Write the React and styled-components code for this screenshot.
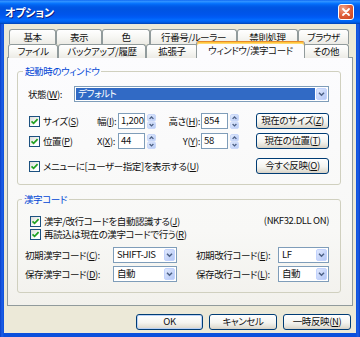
import React from 'react';
import styled, { createGlobalStyle } from 'styled-components';

const GlobalStyle = createGlobalStyle`
  * { box-sizing: border-box; }
  html, body { margin: 0; padding: 0; }
  body {
    width: 360px;
    height: 337px;
    overflow: hidden;
    font-family: 'Noto Sans CJK JP', 'Noto Sans', sans-serif;
    font-size: 9.5px;
    letter-spacing: -0.4px;
    font-feature-settings: 'palt';
    color: #111;
  }
`;

const Window = styled.div`
  width: 360px;
  height: 337px;
  display: flex;
  flex-direction: column;
  background: linear-gradient(90deg, #0A3FC8 0, #1D5FE6 2px, #0B4FDC 4px, #0B4FDC 356px, #1D5FE6 358px, #0A3FC8 100%);
`;

const TitleBar = styled.div`
  height: 24px;
  flex-shrink: 0;
  display: flex;
  align-items: center;
  justify-content: space-between;
  padding: 0 6px 0 5px;
  background: linear-gradient(180deg, #0058EE 0%, #3593FF 4%, #288EFF 8%, #127DFF 12%, #036FFC 16%, #0262EE 22%, #0057E5 30%, #0054E3 40%, #0055EB 60%, #005BF5 72%, #026AFE 82%, #0062EF 90%, #0052D6 96%, #0040AB 100%);
`;

const Title = styled.span`
  color: #fff;
  font-weight: bold;
  font-size: 11px;
  letter-spacing: -0.2px;
  text-shadow: 1px 1px 0 #0A1E80;
`;

const CloseButton = styled.div`
  width: 16px;
  height: 16px;
  border: 1px solid #fff;
  border-radius: 3px;
  background: radial-gradient(circle at 30% 25%, #F0A48A 0%, #E2623E 45%, #C8401C 100%);
  display: flex;
  align-items: center;
  justify-content: center;
`;

const Client = styled.div`
  flex: 1;
  margin: 0 4px 4px;
  background: #ECE9D8;
  padding: 4px 3px 0;
  display: flex;
  flex-direction: column;
`;

const TabRow = styled.div`
  display: flex;
  align-items: flex-start;
  height: ${({ h }) => h}px;
  padding-left: ${({ indent }) => indent}px;
  margin-top: ${({ top }) => top || 0}px;
  position: relative;
  z-index: 2;
`;

const Tab = styled.div`
  width: ${({ w }) => w}px;
  height: ${({ h }) => h}px;
  flex-shrink: 0;
  display: flex;
  align-items: center;
  justify-content: center;
  border: 1px solid #919B9C;
  border-bottom: none;
  border-radius: 3px 3px 0 0;
  background: linear-gradient(#FFFFFF, #F7F7F4 50%, #ECEBE5);
  white-space: nowrap;
  line-height: 1;
  padding-top: 1px;
`;

const ActiveTab = styled(Tab)`
  height: 17px;
  margin: -3px -2px 0;
  width: ${({ w }) => w + 4}px;
  background: #FCFCFE;
  border-top: 1px solid #E68B2C;
  box-shadow: inset 0 1px 0 #FFC73C, inset 0 2px 0 #FFD870;
  position: relative;
  z-index: 3;
  padding-top: 2px;
`;

const Panel = styled.div`
  height: 249px;
  margin-top: -1px;
  border: 1px solid #919B9C;
  background: linear-gradient(#FCFCFE, #F8F8F6 70%, #F2F1EC);
  padding: 0 11px 0 9px;
  position: relative;
  z-index: 1;
`;

const Group = styled.fieldset`
  margin: ${({ top }) => top}px 0 0;
  width: 324px;
  border: 1px solid #D0D0BF;
  border-radius: 3px;
  padding: 0 11px ${({ bottom }) => bottom}px ${({ left }) => left}px;
`;

const Legend = styled.legend`
  color: #0046D5;
  line-height: 12px;
  height: 12px;
  padding: 0 2px;
  margin-left: ${({ shift }) => shift}px;
`;

const Row = styled.div`
  display: flex;
  align-items: center;
  height: ${({ h }) => h || 16}px;
  margin-top: ${({ top }) => top}px;
  margin-left: ${({ indent }) => indent || 0}px;
  white-space: nowrap;
`;

const Label = styled.span`
  width: ${({ w }) => (w ? `${w}px` : 'auto')};
  flex-shrink: 0;
  text-align: ${({ right }) => (right ? 'right' : 'left')};
  padding-right: ${({ right }) => (right ? 1 : 0)}px;
`;

const Spacer = styled.div`
  flex: 1;
`;

const CheckWrap = styled.label`
  display: flex;
  align-items: center;
  width: ${({ w }) => (w ? `${w}px` : 'auto')};
  flex-shrink: 0;
  gap: 3px;
`;

const CheckBox = styled.span`
  width: 11px;
  height: 11px;
  border: 1px solid #1C5180;
  background: linear-gradient(135deg, #DCDCD7, #FFFFFF 70%);
  display: flex;
  align-items: center;
  justify-content: center;
`;

const Input = styled.div`
  width: 27px;
  height: 16px;
  border: 1px solid #7F9DB9;
  background: #fff;
  padding-left: 2px;
  display: flex;
  align-items: center;
  line-height: 1;
  letter-spacing: -0.2px;
`;

const SpinBox = styled.span`
  display: flex;
  margin-left: 2px;
  margin-right: ${({ after }) => after}px;
`;

const Combo = styled.div`
  width: ${({ w }) => (w ? `${w}px` : 'auto')};
  flex: ${({ w }) => (w ? '0 0 auto' : '1')};
  height: ${({ h }) => h || 16}px;
  border: 1px solid #7F9DB9;
  background: #fff;
  display: flex;
  align-items: center;
  padding: 1px;
`;

const ComboText = styled.span`
  flex: 1;
  height: 100%;
  display: flex;
  align-items: center;
  padding-left: 2px;
  line-height: 1;
  color: ${({ selected }) => (selected ? '#fff' : '#111')};
  background: ${({ selected }) => (selected ? '#316AC5' : 'transparent')};
  margin-right: 1px;
`;

const PushButton = styled.div`
  width: ${({ w }) => w}px;
  height: 16px;
  flex-shrink: 0;
  border: 1px solid #003C74;
  border-radius: 3px;
  background: linear-gradient(#FFFFFF, #F4F4F0 55%, #E3E0D6 85%, #D6D0C5);
  box-shadow: ${({ primary }) => (primary ? 'inset 0 0 0 1px #B9D1F6' : 'none')};
  display: flex;
  align-items: center;
  justify-content: center;
  line-height: 1;
  white-space: nowrap;
`;

const ButtonBar = styled.div`
  display: flex;
  justify-content: flex-end;
  gap: 6px;
  margin-top: 8px;
  padding-right: 2px;
`;

const Note = styled.span`
  line-height: 1;
`;

const Check = ({ w, children }) => (
  <CheckWrap w={w}>
    <CheckBox>
      <svg width="9" height="9" viewBox="0 0 9 9">
        <path d="M1.5 4.3 L3.6 6.4 L7.6 2.2" stroke="#21A121" strokeWidth="1.7" fill="none" />
      </svg>
    </CheckBox>
    <span>{children}</span>
  </CheckWrap>
);

const Spin = ({ after = 0 }) => (
  <SpinBox after={after}>
    <svg width="9" height="15" viewBox="0 0 9 15">
      <defs>
        <linearGradient id="spinfill" x1="0" y1="0" x2="1" y2="1">
          <stop offset="0" stopColor="#E6EEFE" />
          <stop offset="1" stopColor="#B4C8F5" />
        </linearGradient>
      </defs>
      <rect x="0.5" y="0.5" width="8" height="6.5" rx="1.5" fill="url(#spinfill)" stroke="#CAD8F9" />
      <rect x="0.5" y="8" width="8" height="6.5" rx="1.5" fill="url(#spinfill)" stroke="#CAD8F9" />
      <path d="M2.6 4.9 L4.5 3 L6.4 4.9" stroke="#4D6185" strokeWidth="1.3" fill="none" />
      <path d="M2.6 10 L4.5 11.9 L6.4 10" stroke="#4D6185" strokeWidth="1.3" fill="none" />
    </svg>
  </SpinBox>
);

const ComboArrow = () => (
  <svg width="11" height="12" viewBox="0 0 11 12">
    <defs>
      <linearGradient id="combofill" x1="0" y1="0" x2="1" y2="1">
        <stop offset="0" stopColor="#E2EAFE" />
        <stop offset="1" stopColor="#B1C5F5" />
      </linearGradient>
    </defs>
    <rect x="0.5" y="0.5" width="10" height="11" rx="1.5" fill="url(#combofill)" stroke="#C3D3FD" />
    <path d="M3 4.8 L5.5 7.3 L8 4.8" stroke="#4D6185" strokeWidth="1.5" fill="none" />
  </svg>
);

const Select = ({ w, selected, children }) => (
  <Combo w={w}>
    <ComboText selected={selected}>{children}</ComboText>
    <ComboArrow />
  </Combo>
);

const tabsBack = [
  ['基本', 47],
  ['表示', 46],
  ['色', 48],
  ['行番号/ルーラー', 87],
  ['禁則処理', 61],
  ['ブラウザ', 51],
];

const tabsFront = [
  ['ファイル', 50],
  ['バックアップ/履歴', 88],
  ['拡張子', 52],
  ['ウィンドウ/漢字コード', 105, true],
  ['その他', 46],
];

const App = () => (
  <>
    <GlobalStyle />
    <Window>
      <TitleBar>
        <Title>オプション</Title>
        <CloseButton>
          <svg width="10" height="10" viewBox="0 0 10 10">
            <path d="M2 2 L8 8 M8 2 L2 8" stroke="#fff" strokeWidth="1.8" strokeLinecap="round" />
          </svg>
        </CloseButton>
      </TitleBar>
      <Client>
        <TabRow h={15} indent={2} top={1}>
          {tabsBack.map(([name, w]) => (
            <Tab key={name} w={w} h={15}>{name}</Tab>
          ))}
        </TabRow>
        <TabRow h={14} indent={1}>
          {tabsFront.map(([name, w, active]) =>
            active ? (
              <ActiveTab key={name} w={w} h={17}>{name}</ActiveTab>
            ) : (
              <Tab key={name} w={w} h={14}>{name}</Tab>
            )
          )}
        </TabRow>
        <Panel>
          <Group top={7} left={10} bottom={10}>
            <Legend shift={-5}>起動時のウィンドウ</Legend>
            <Row top={8} h={17}>
              <Label w={46}>状態(<u>W</u>):</Label>
              <Select selected>デフォルト</Select>
            </Row>
            <Row top={11} indent={1}>
              <Check w={68}>サイズ(<u>S</u>)</Check>
              <Label w={21}>幅(<u>I</u>):</Label>
              <Input>1,200</Input>
              <Spin after={9} />
              <Label w={36} right>高さ(<u>H</u>):</Label>
              <Input>854</Input>
              <Spin />
              <Spacer />
              <PushButton w={73}>現在のサイズ(<u>Z</u>)</PushButton>
            </Row>
            <Row top={4} indent={1}>
              <Check w={68}>位置(<u>P</u>)</Check>
              <Label w={21}>X(<u>X</u>):</Label>
              <Input>44</Input>
              <Spin after={9} />
              <Label w={36} right>Y(<u>Y</u>):</Label>
              <Input>58</Input>
              <Spin />
              <Spacer />
              <PushButton w={73}>現在の位置(<u>T</u>)</PushButton>
            </Row>
            <Row top={9} indent={1}>
              <Check>メニューに[ユーザー指定]を表示する(<u>U</u>)</Check>
              <Spacer />
              <PushButton w={73}>今すぐ反映(<u>O</u>)</PushButton>
            </Row>
          </Group>
          <Group top={8} left={7} bottom={10}>
            <Legend shift={-3}>漢字コード</Legend>
            <Row top={10} h={12} indent={5}>
              <Check>漢字/改行コードを自動認識する(<u>J</u>)</Check>
              <Spacer />
              <Note>(NKF32.DLL ON)</Note>
            </Row>
            <Row top={1} h={12} indent={5}>
              <Check>再読込は現在の漢字コードで行う(<u>R</u>)</Check>
            </Row>
            <Row top={7}>
              <Label w={88}>初期漢字コード(<u>C</u>):</Label>
              <Select w={64}>SHIFT-JIS</Select>
              <Spacer />
              <Label w={82}>初期改行コード(<u>E</u>):</Label>
              <Select w={51}>LF</Select>
            </Row>
            <Row top={3}>
              <Label w={88}>保存漢字コード(<u>D</u>):</Label>
              <Select w={64}>自動</Select>
              <Spacer />
              <Label w={82}>保存改行コード(<u>L</u>):</Label>
              <Select w={51}>自動</Select>
            </Row>
          </Group>
        </Panel>
        <ButtonBar>
          <PushButton w={67} primary>OK</PushButton>
          <PushButton w={68}>キャンセル</PushButton>
          <PushButton w={68}>一時反映(<u>N</u>)</PushButton>
        </ButtonBar>
      </Client>
    </Window>
  </>
);

export default App;
